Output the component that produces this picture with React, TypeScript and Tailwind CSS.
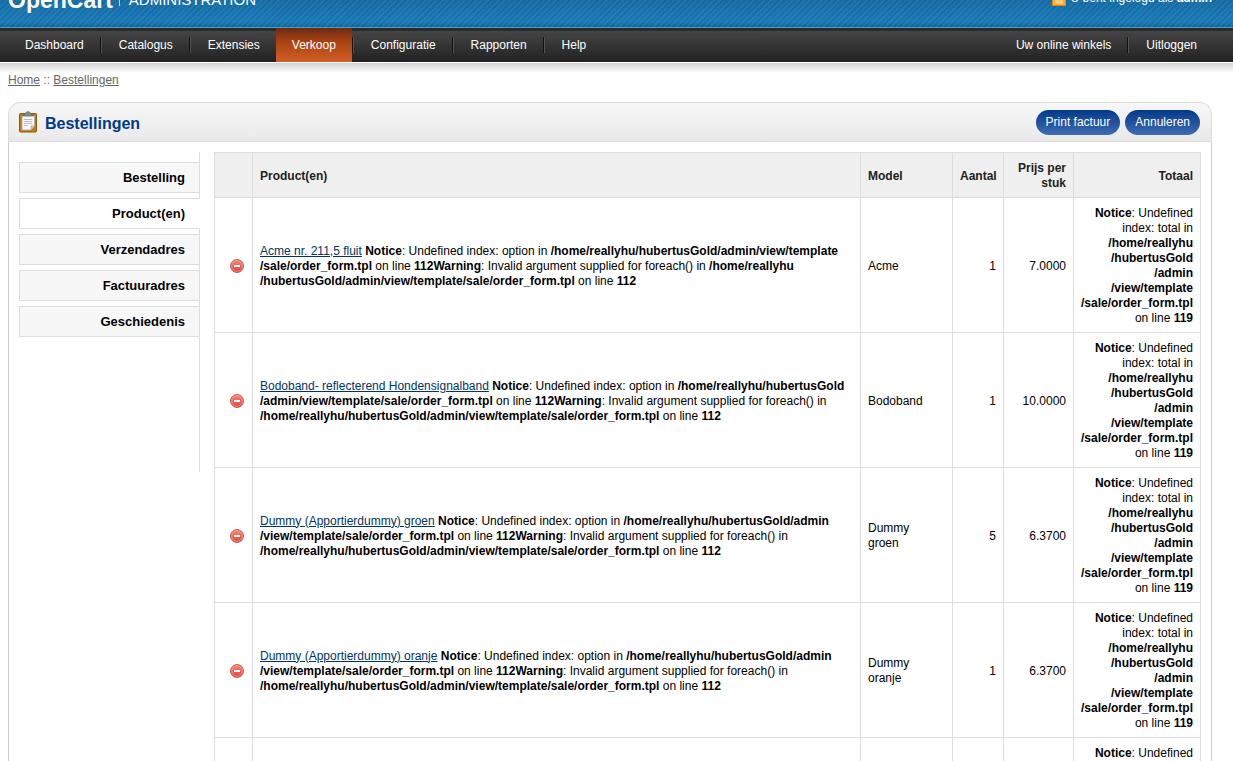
import type { ReactNode } from 'react'

const menu = ['Dashboard', 'Catalogus', 'Extensies', 'Verkoop', 'Configuratie', 'Rapporten', 'Help']
const tabs = ['Bestelling', 'Product(en)', 'Verzendadres', 'Factuuradres', 'Geschiedenis']

type Row = {
  name: string
  lines: ReactNode[]
  model: ReactNode
  quantity: string
  price: string
}

const rows: Row[] = [
  {
    name: 'Acme nr. 211,5 fluit',
    lines: [
      <><b>Notice</b>: Undefined index: option in <b>/home/reallyhu/hubertusGold/admin/view/template</b></>,
      <><b>/sale/order_form.tpl</b> on line <b>112Warning</b>: Invalid argument supplied for foreach() in <b>/home/reallyhu</b></>,
      <><b>/hubertusGold/admin/view/template/sale/order_form.tpl</b> on line <b>112</b></>,
    ],
    model: 'Acme',
    quantity: '1',
    price: '7.0000',
  },
  {
    name: 'Bodoband- reflecterend Hondensignalband',
    lines: [
      <><b>Notice</b>: Undefined index: option in <b>/home/reallyhu/hubertusGold</b></>,
      <><b>/admin/view/template/sale/order_form.tpl</b> on line <b>112Warning</b>: Invalid argument supplied for foreach() in</>,
      <><b>/home/reallyhu/hubertusGold/admin/view/template/sale/order_form.tpl</b> on line <b>112</b></>,
    ],
    model: 'Bodoband',
    quantity: '1',
    price: '10.0000',
  },
  {
    name: 'Dummy (Apportierdummy) groen',
    lines: [
      <><b>Notice</b>: Undefined index: option in <b>/home/reallyhu/hubertusGold/admin</b></>,
      <><b>/view/template/sale/order_form.tpl</b> on line <b>112Warning</b>: Invalid argument supplied for foreach() in</>,
      <><b>/home/reallyhu/hubertusGold/admin/view/template/sale/order_form.tpl</b> on line <b>112</b></>,
    ],
    model: <>Dummy<br />groen</>,
    quantity: '5',
    price: '6.3700',
  },
  {
    name: 'Dummy (Apportierdummy) oranje',
    lines: [
      <><b>Notice</b>: Undefined index: option in <b>/home/reallyhu/hubertusGold/admin</b></>,
      <><b>/view/template/sale/order_form.tpl</b> on line <b>112Warning</b>: Invalid argument supplied for foreach() in</>,
      <><b>/home/reallyhu/hubertusGold/admin/view/template/sale/order_form.tpl</b> on line <b>112</b></>,
    ],
    model: <>Dummy<br />oranje</>,
    quantity: '1',
    price: '6.3700',
  },
  { name: '', lines: [], model: '', quantity: '', price: '' },
]

function Separator() {
  return <span className="mr-px h-4 w-[2px] border-l border-r border-l-[#111] border-r-[#555]" />
}

function ClipboardIcon() {
  return (
    <svg width="20" height="22" viewBox="0 0 20 22" aria-hidden="true">
      <rect x="1.5" y="2.5" width="17" height="18.5" rx="1" fill="#c17d11" stroke="#8f5902" />
      <path d="M4 4.500h12.500v10.500l-3.500 4h-9z" fill="#f6f6f5" stroke="#a8a8a4" strokeWidth=".8" />
      <path d="M16.500 15h-3.500v4z" fill="#d3d7cf" stroke="#999" strokeWidth=".6" />
      <path d="M6 8.500h8M6 10.500h8M6 12.500h8M6 14.500h4" stroke="#bdbdbd" strokeWidth="1" />
      <path d="M4.500 5V3.500h2.500C7.500 1.500 8.500.8 10 .8s2.500.7 3 2.700h2.500V5z" fill="#888a85" stroke="#6b6d69" strokeWidth=".8" />
    </svg>
  )
}

function RemoveIcon() {
  return (
    <svg width="14" height="14" viewBox="0 0 14 14" aria-hidden="true">
      <defs>
        <linearGradient id="remove" x1="0" y1="0" x2="0" y2="1">
          <stop offset="0" stopColor="#f58a78" />
          <stop offset="1" stopColor="#e0403a" />
        </linearGradient>
      </defs>
      <circle cx="7" cy="7" r="6.500" fill="url(#remove)" stroke="#cb6058" />
      <circle cx="7" cy="7" r="5.300" fill="none" stroke="#f7a99c" strokeWidth=".6" />
      <rect x="4" y="6" width="6" height="2" fill="#fff" />
    </svg>
  )
}

function LockIcon() {
  return (
    <svg width="14" height="16" viewBox="0 0 14 16" aria-hidden="true">
      <path d="M4 8V4a3 3 0 0 1 6 0v4" fill="none" stroke="#bbb" strokeWidth="2" />
      <rect x=".5" y="6.500" width="13" height="9" fill="#fbb03b" stroke="#e8850f" />
      <rect x="4" y="9" width="6" height="4" fill="#fbc56b" stroke="#fde3a0" />
    </svg>
  )
}

export default function App() {
  return (
    <div className="h-screen overflow-hidden bg-white font-['Liberation_Sans',Arial,sans-serif] text-xs leading-[15px] text-black">
      {/* Header */}
      <header className="flex h-[27px] items-end justify-between overflow-hidden bg-[repeating-linear-gradient(135deg,#ffffff0c_0_2px,#00000008_2px_4px),linear-gradient(#146ba5,#177ab8_80%,#11689c)] pr-[21px] pl-2 text-white">
        <div className="flex items-end">
          <span className="mb-[14px] text-[23px] leading-[26px] font-bold">OpenCart</span>
          <span className="mb-[21px] ml-[6px] h-5 w-px bg-white/70" />
          <span className="mb-[17px] ml-[9px] text-[15px] leading-5">ADMINISTRATION</span>
        </div>
        <div className="mb-[21px] flex items-end gap-[5px]">
          <LockIcon />
          <span>U bent ingelogd als <b>admin</b></span>
        </div>
      </header>

      {/* Menu */}
      <nav className="flex h-[35px] items-center justify-between border-t border-[#4a9acb] bg-[linear-gradient(#2b2b2b_0_3px,#454545_3px,#222)] pr-5 pl-[9px] text-white">
        <ul className="flex h-full">
          {menu.map((item, i) => (
            <li key={item} className="flex items-center">
              <a
                href="#"
                className={
                  item === 'Verkoop'
                    ? 'flex h-full items-center bg-[linear-gradient(#6b2a12,#a94213_40%,#d15f26)] px-4 pt-px'
                    : 'flex h-full items-center px-4 pt-px'
                }
              >
                {item}
              </a>
              {i < menu.length - 1 && item !== 'Extensies' && <Separator />}
            </li>
          ))}
        </ul>
        <div className="flex h-full items-center">
          <a href="#" className="px-4 pt-px">Uw online winkels</a>
          <Separator />
          <a href="#" className="px-4 pt-px">Uitloggen</a>
        </div>
      </nav>
      <div className="h-[11px] border-t border-white bg-linear-to-b from-[#d2d2d2] to-white" />

      <main className="pr-[21px] pl-2">
        <div className="text-[#666]">
          <a href="#" className="underline">Home</a> :: <a href="#" className="underline">Bestellingen</a>
        </div>

        <div className="mt-[14px] flex h-10 items-center justify-between rounded-t-xl border border-[#dbdbdb] bg-linear-to-b from-[#f7f7f7] to-[#e9e9e9] pr-[11px] pl-[9px]">
          <h1 className="flex items-center gap-[7px] text-base font-bold text-[#003a88]">
            <ClipboardIcon />
            <span className="pt-[3px]">Bestellingen</span>
          </h1>
          <div className="flex gap-[5px]">
            <button className="h-[25px] rounded-full bg-linear-to-b from-[#003a88] to-[#3e6cb4] px-[10px] pt-px text-white">Print factuur</button>
            <button className="h-[25px] rounded-full bg-linear-to-b from-[#003a88] to-[#3e6cb4] px-[10px] pt-px text-white">Annuleren</button>
          </div>
        </div>

        <div className="flex items-start border-x border-[#ccc] p-[10px]">
          {/* Vertical tabs */}
          <div className="mr-[14px] flex h-80 w-[181px] shrink-0 flex-col gap-[5px] border-r border-[#ddd] pt-[10px]">
            {tabs.map((tab) => (
              <a
                key={tab}
                href="#"
                className={
                  tab === 'Product(en)'
                    ? '-mr-px border border-r-0 border-[#ddd] bg-white py-[7px] pr-[15px] text-right text-[13px] font-bold'
                    : 'border border-r-0 border-[#ddd] bg-[#f7f7f7] py-[7px] pr-[14px] text-right text-[13px] font-bold'
                }
              >
                {tab}
              </a>
            ))}
          </div>

          <table className="w-full table-fixed border-collapse border border-[#ddd] [&_td]:border [&_td]:border-[#ddd] [&_td]:px-[7px] [&_td]:pt-2 [&_td]:pb-[6px] [&_th]:border [&_th]:border-[#ddd] [&_th]:px-[7px] [&_th]:pt-2 [&_th]:pb-[6px]">
            <colgroup>
              <col className="w-[38px]" />
              <col />
              <col className="w-[92px]" />
              <col className="w-[51px]" />
              <col className="w-[70px]" />
              <col className="w-[127px]" />
            </colgroup>
            <thead className="bg-[#efefef] text-[#222]">
              <tr>
                <th />
                <th className="text-left">Product(en)</th>
                <th className="text-left">Model</th>
                <th className="text-right whitespace-nowrap">Aantal</th>
                <th className="text-right">Prijs per stuk</th>
                <th className="text-right">Totaal</th>
              </tr>
            </thead>
            <tbody>
              {rows.map((row, i) => (
                <tr key={i}>
                  <td>
                    {row.name && (
                      <button aria-label="Verwijderen" className="mb-px ml-2 block">
                        <RemoveIcon />
                      </button>
                    )}
                  </td>
                  <td className="whitespace-nowrap">
                    {row.lines.map((line, n) => (
                      <div key={n}>
                        {n === 0 && <><a href="#" className="text-[#003366] underline">{row.name}</a>{' '}</>}
                        {line}
                      </div>
                    ))}
                  </td>
                  <td>{row.model}</td>
                  <td className="text-right">{row.quantity}</td>
                  <td className="text-right">{row.price}</td>
                  <td className="text-right whitespace-nowrap">
                    <b>Notice</b>: Undefined<br />
                    index: total in<br />
                    <b>
                      /home/reallyhu<br />
                      /hubertusGold<br />
                      /admin<br />
                      /view/template<br />
                      /sale/order_form.tpl
                    </b><br />
                    on line <b>119</b>
                  </td>
                </tr>
              ))}
            </tbody>
          </table>
        </div>
      </main>
    </div>
  )
}
